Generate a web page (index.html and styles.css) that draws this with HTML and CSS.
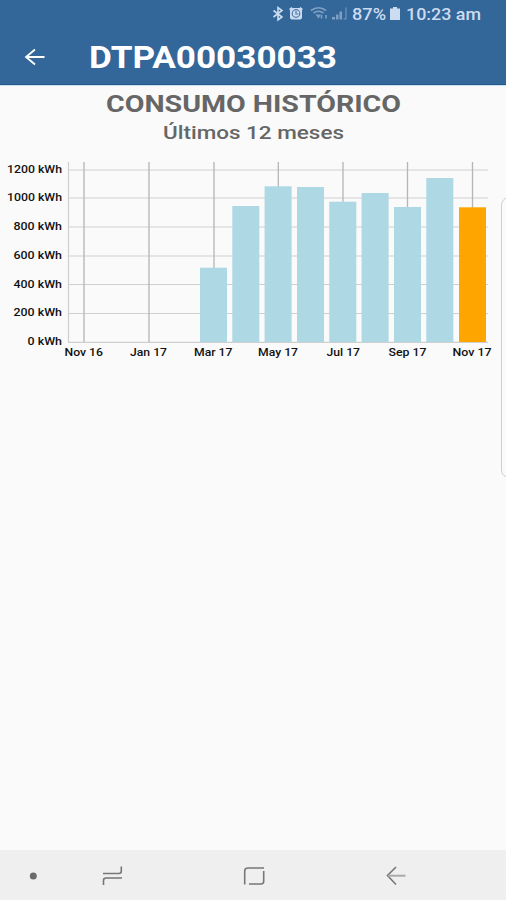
FILE: index.html
```html
<!DOCTYPE html>
<html lang="es">
<head>
	<meta charset="UTF-8">
	<title>Consumo histórico</title>
	<link rel="stylesheet" href="styles.css">
</head>
<body>
	<div class="screen">
		<header class="header">
			<div class="status">
				<svg class="status-icons" width="76" height="18" viewBox="272 5 76 18">
					<path class="ico-line" d="M273.500 10.500L282 17L278 20V7.500L282 10.500L273.500 17"/>
					<rect class="ico-fill" x="290" y="8" width="12" height="11.500" rx="2"/>
					<path class="ico-line" d="M289.500 9.500L292 7.500M302.500 9.500L300 7.500"/>
					<circle class="clock" cx="296" cy="13.500" r="3.800"/>
					<path class="clock" d="M296 11V14H298.500"/>
					<g class="weak">
						<path class="ico-line" d="M311 10.500Q318.500 5 326 10.500M313.500 13Q318.500 9.500 323.500 13"/>
						<path class="ico-fill" d="M315.500 14.500L318.500 18.500L321 14.500Z"/>
						<path class="ico-line" d="M321.500 15V18.500M326 15V18.500"/>
						<path class="ico-fill" d="M332 17H335V19.500H332ZM336 14.500H338.500V19.500H336ZM339.500 11.500H342V19.500H339.500Z"/>
						<path class="ico-line thin" d="M343.500 19H346V7.500"/>
					</g>
				</svg>
				<svg class="status-text" width="134" height="18" viewBox="350 5 134 18">
					<text x="352" y="19.800" textLength="34" lengthAdjust="spacingAndGlyphs">87%</text>
					<path class="ico-fill" d="M393 7H397V8.500H400V20H390V8.500H393Z"/>
					<text x="406" y="19.800" textLength="75" lengthAdjust="spacingAndGlyphs">10:23 am</text>
				</svg>
			</div>
			<div class="bar">
				<svg class="back" width="22" height="18" viewBox="0 0 22 18">
					<path d="M20.500 9H2M11 1.500L2 9L11 16.500"/>
				</svg>
				<svg class="title" width="250" height="36">
					<text x="0" y="28.500" textLength="248" lengthAdjust="spacingAndGlyphs">DTPA00030033</text>
				</svg>
			</div>
		</header>

		<main class="content">
			<svg class="heading" width="506" height="60">
				<text class="h1" x="106" y="26.500" textLength="295" lengthAdjust="spacingAndGlyphs">CONSUMO HISTÓRICO</text>
				<text class="h2" x="163" y="54.300" textLength="181" lengthAdjust="spacingAndGlyphs">Últimos 12 meses</text>
			</svg>

			<svg class="chart" width="496" height="215" viewBox="0 145 496 215">
				<g class="grid">
					<path d="M68 170H488M68 198H488M68 227H488M68 256H488M68 284.500H488M68 313.500H488M68 342.300H488M68.500 162V342"/>
					<path class="vert" d="M84 162V342M149 162V342M214 162V342M278.300 162V342M343 162V342M407.500 162V342M472.500 162V342"/>
				</g>
				<g class="bars">
					<rect x="200" y="267.700" width="27" height="74.300"/>
					<rect x="232.300" y="206" width="27" height="136"/>
					<rect x="264.600" y="186.300" width="27" height="155.700"/>
					<rect x="297" y="187" width="27" height="155"/>
					<rect x="329.300" y="201.700" width="27" height="140.300"/>
					<rect x="361.600" y="193" width="27" height="149"/>
					<rect x="394" y="207" width="27" height="135"/>
					<rect x="426.300" y="178" width="27" height="164"/>
					<rect class="current" x="459" y="207.300" width="27" height="134.700"/>
				</g>
				<g class="labels">
					<text x="7" y="172.500" textLength="55" lengthAdjust="spacingAndGlyphs">1200 kWh</text>
					<text x="7" y="201.300" textLength="55" lengthAdjust="spacingAndGlyphs">1000 kWh</text>
					<text x="13.500" y="230" textLength="48.500" lengthAdjust="spacingAndGlyphs">800 kWh</text>
					<text x="13.500" y="258.800" textLength="48.500" lengthAdjust="spacingAndGlyphs">600 kWh</text>
					<text x="13.500" y="287.600" textLength="48.500" lengthAdjust="spacingAndGlyphs">400 kWh</text>
					<text x="13.500" y="316.400" textLength="48.500" lengthAdjust="spacingAndGlyphs">200 kWh</text>
					<text x="27.500" y="345" textLength="34.500" lengthAdjust="spacingAndGlyphs">0 kWh</text>
					<text x="64.500" y="356" textLength="38.500" lengthAdjust="spacingAndGlyphs">Nov 16</text>
					<text x="130" y="356" textLength="37" lengthAdjust="spacingAndGlyphs">Jan 17</text>
					<text x="194" y="356" textLength="38.500" lengthAdjust="spacingAndGlyphs">Mar 17</text>
					<text x="258" y="356" textLength="40" lengthAdjust="spacingAndGlyphs">May 17</text>
					<text x="326.500" y="356" textLength="33.500" lengthAdjust="spacingAndGlyphs">Jul 17</text>
					<text x="388.500" y="356" textLength="38" lengthAdjust="spacingAndGlyphs">Sep 17</text>
					<text x="452.500" y="356" textLength="39" lengthAdjust="spacingAndGlyphs">Nov 17</text>
				</g>
			</svg>
			<div class="edge-panel"></div>
		</main>

		<nav class="nav">
			<svg width="506" height="50" viewBox="0 850 506 50">
				<circle class="dot" cx="33.300" cy="876" r="3.500"/>
				<path d="M103 873.500H119Q121.300 873.500 121.300 871V866.500M122 878H106Q103.500 878 103.500 880.500V885"/>
				<path d="M264 868H248Q244.700 868 244.700 871V884.500M249 884H261Q263.700 884 263.700 881V871"/>
				<path d="M396 867L387.500 875.500L396 884.500"/>
				<path class="pale" d="M388 875.700H405.500"/>
			</svg>
		</nav>
	</div>
</body>
</html>
```
FILE: styles.css
```css
*{
	margin: 0;
	padding: 0;
	box-sizing: border-box;
}
body{
	font-family: Roboto, "Liberation Sans", sans-serif;
	background: #fafafa;
}
svg{
	display: block;
}
.screen{
	width: 506px;
	height: 900px;
	display: flex;
	flex-direction: column;
	overflow: hidden;
}
.header{
	height: 85px;
	background: #336699;
	border-bottom: 1px solid #24588c;
}
.status{
	display: flex;
	justify-content: flex-end;
	gap: 2px;
	padding: 5px 22px 0 0;
}
.status-text text{
	font-size: 16px;
	font-weight: 500;
	fill: #ccdcf0;
}
.ico-fill{
	fill: #ccdcf0;
}
.ico-line{
	fill: none;
	stroke: #ccdcf0;
	stroke-width: 1.6;
}
.thin{
	stroke-width: 1;
}
.clock{
	fill: none;
	stroke: #4f7bab;
	stroke-width: 1.2;
}
.weak{
	opacity: 0.5;
}
.bar{
	display: flex;
	align-items: center;
	padding: 16px 0 0 24px;
}
.back{
	fill: none;
	stroke: #fff;
	stroke-width: 1.8;
}
.title{
	margin-left: 43px;
}
.title text{
	font-size: 31px;
	font-weight: 700;
	fill: #fff;
}
.content{
	flex: 1;
	position: relative;
	border-top: 1px solid #c9dff2;
}
.heading{
	margin-top: -1px;
}
.h1{
	font-size: 24px;
	font-weight: 700;
	fill: #666;
}
.h2{
	font-size: 19px;
	font-weight: 500;
	fill: #666;
}
.grid path{
	fill: none;
	stroke: #cfcfcf;
	stroke-width: 1.2;
}
.grid .vert{
	stroke: #b5b5b5;
	stroke-width: 1.3;
}
.bars rect{
	fill: #add8e4;
}
.bars .current{
	fill: #ffa500;
}
.labels text{
	font-size: 10px;
	font-weight: 500;
	fill: #111;
}
/* handle of the side panel, cut off by the screen edge */
.edge-panel{
	position: absolute;
	top: 111px;
	right: -12px;
	width: 17px;
	height: 281px;
	border: 1px solid #cfcfcf;
	border-radius: 8px;
}
.nav{
	height: 50px;
	background: #efefef;
}
.nav path{
	fill: none;
	stroke: #777;
	stroke-width: 1.6;
}
.nav .pale{
	stroke: #aaa;
	stroke-width: 2;
}
.dot{
	fill: #6b6b6b;
}
```
